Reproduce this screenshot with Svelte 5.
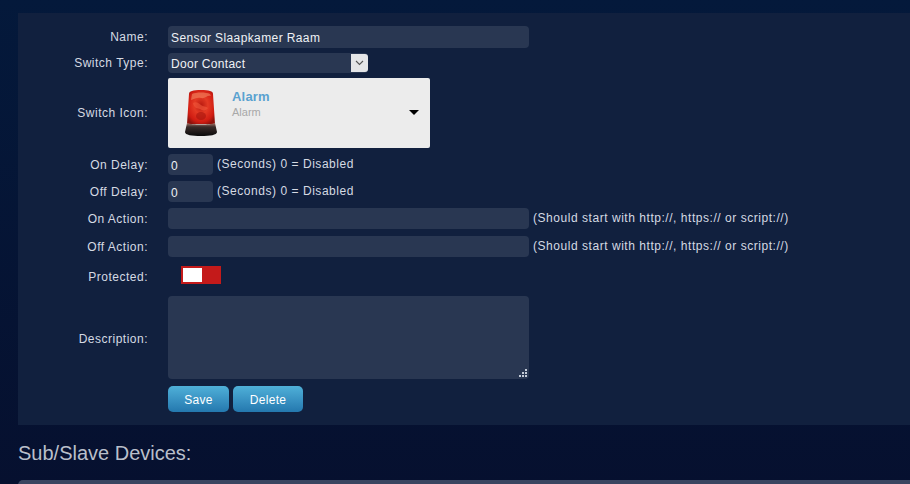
<script lang="ts">
  const delays = [
    { label: 'On Delay:', value: '0' },
    { label: 'Off Delay:', value: '0' },
  ];
  const actions = ['On Action:', 'Off Action:'];
</script>

<main class="page">
  <form class="panel">
    <div class="row row--name">
      <span class="label">Name:</span>
      <div class="input input--wide">Sensor Slaapkamer Raam</div>
    </div>
    <div class="row row--type">
      <span class="label">Switch Type:</span>
      <div class="select">
        <span class="select__value">Door Contact</span>
        <span class="select__btn">
          <svg width="9" height="6" viewBox="0 0 9 6"><path d="M1 1l3.5 3.5L8 1" fill="none" stroke="#555" stroke-width="1.1" /></svg>
        </span>
      </div>
    </div>
    <div class="row row--icon">
      <span class="label">Switch Icon:</span>
      <div class="iconbox">
        <svg class="siren" width="34" height="48" viewBox="0 0 34 48">
          <defs>
            <radialGradient id="dome" cx="0.5" cy="0.45" r="0.62">
              <stop offset="0" stop-color="#b81a10" />
              <stop offset="0.4" stop-color="#e43a24" />
              <stop offset="0.8" stop-color="#d01c12" />
              <stop offset="1" stop-color="#8f120c" />
            </radialGradient>
            <linearGradient id="base" x1="0" y1="0" x2="0" y2="1">
              <stop offset="0" stop-color="#a87468" />
              <stop offset="0.3" stop-color="#3a2c2a" />
              <stop offset="1" stop-color="#0a0a0a" />
            </linearGradient>
          </defs>
          <path d="M5 5C5 2 9 1 17 1s12 1 12 4l2 30H3z" fill="url(#dome)" />
          <path d="M8 5c4-2 14-2 18 0l1 2c-4-1-6 3-10 2s-6 1-10 2z" fill="#f07a58" opacity=".7" />
          <path d="M9 14c3-2 6 0 8 2s5 1 7 3c-3 4-6 2-8 1s-6 0-7-6z" fill="#f2583c" opacity=".6" />
          <ellipse cx="17" cy="27" rx="5" ry="4" fill="#a5140e" opacity=".6" />
          <path d="M3 34c5 2 23 2 28 0l2 9c0 3-7 4-16 4S1 46 1 43z" fill="url(#base)" />
        </svg>
        <div class="iconbox__copy">
          <strong>Alarm</strong>
          <small>Alarm</small>
        </div>
        <span class="iconbox__arrow"></span>
      </div>
    </div>
    {#each delays as delay}
      <div class="row row--delay">
        <span class="label">{delay.label}</span>
        <div class="input input--short">{delay.value}</div>
        <span class="hint">(Seconds) 0 = Disabled</span>
      </div>
    {/each}
    {#each actions as action}
      <div class="row row--action">
        <span class="label">{action}</span>
        <div class="input input--wide"></div>
        <span class="hint">(Should start with http://, https:// or script://)</span>
      </div>
    {/each}
    <div class="row row--protected">
      <span class="label">Protected:</span>
      <span class="toggle"><span class="toggle__knob"></span></span>
    </div>
    <div class="row row--desc">
      <span class="label">Description:</span>
      <div class="textarea">
        <svg class="grip" width="8" height="8" viewBox="0 0 8 8" fill="#c4ccd8">
          <rect x="6" y="0" width="2" height="2" /><rect x="3" y="3" width="2" height="2" /><rect x="6" y="3" width="2" height="2" />
          <rect x="0" y="6" width="2" height="2" /><rect x="3" y="6" width="2" height="2" /><rect x="6" y="6" width="2" height="2" />
        </svg>
      </div>
    </div>
    <div class="row row--buttons">
      <span class="label"></span>
      <button type="button" class="btn btn--save">Save</button>
      <button type="button" class="btn btn--delete">Delete</button>
    </div>
  </form>
  <h2>Sub/Slave Devices:</h2>
  <div class="table-top"></div>
</main>

<style>
  :global(body) {
    margin: 0;
    background: #051233;
  }

  .page {
    box-sizing: border-box;
    height: 484px;
    overflow: hidden;
    padding: 13px 0 0 18px;
    background: linear-gradient(180deg, #04193b 0, #06102f 100%);
    font-family: "Liberation Sans", Arial, sans-serif;
    font-size: 12px;
    color: #d8dde6;
  }

  .panel {
    box-sizing: border-box;
    height: 412px;
    padding-top: 13px;
    background: #11203e;
  }

  .row {
    display: flex;
    align-items: center;
  }

  .label {
    flex: none;
    width: 130px;
    margin-right: 20px;
    text-align: right;
    font-size: 12px;
    letter-spacing: 0.5px;
    color: #d5dae3;
  }

  .row--name { height: 22px; margin-bottom: 5px; }
  .row--type { height: 20px; margin-bottom: 5px; }
  .row--icon { height: 70px; margin-bottom: 6px; }
  .row--delay { height: 21px; margin-bottom: 6px; }
  .row--action { height: 21px; margin-bottom: 7px; }
  .row--protected { height: 18px; margin: 9px 0 12px; }
  .row--desc { height: 83px; margin-bottom: 7px; }
  .row--buttons { height: 26px; }

  .row--icon .label { margin-top: -1px; }
  .row--action .label { margin-top: 1px; }
  .row--protected .label { padding-top: 3px; }
  .row--desc .label { padding-top: 2px; }

  .input {
    box-sizing: border-box;
    height: 100%;
    padding: 2px 3px 0;
    display: flex;
    align-items: center;
    border-radius: 4px;
    background: #293752;
    color: #eef1f5;
    font-size: 12px;
    letter-spacing: 0.39px;
  }

  .input--wide { width: 361px; }
  .input--short { width: 45px; margin-right: 4px; }

  .hint {
    margin: -2px 0 0 4px;
    letter-spacing: 0.54px;
    color: #d5dae3;
  }

  .input--short + .hint {
    margin: -2px 0 0;
  }

  .select {
    box-sizing: border-box;
    width: 200px;
    height: 100%;
    padding-left: 3px;
    display: flex;
    align-items: center;
    justify-content: space-between;
    border-radius: 4px;
    background: #293752;
    color: #f0f2f6;
    letter-spacing: 0.3px;
  }

  .select__value { padding-top: 1px; }

  .select__btn {
    width: 17px;
    height: 18px;
    display: grid;
    place-items: center;
    border-radius: 0 3px 3px 0;
    background: #e4e5e7;
  }

  .iconbox {
    box-sizing: border-box;
    position: relative;
    width: 262px;
    height: 70px;
    display: flex;
    align-items: flex-start;
    border-radius: 2px;
    background: #ececec;
  }

  .siren {
    margin: 11px 0 0 16px;
    flex: none;
  }

  .iconbox__copy {
    margin: 11px 0 0 14px;
    display: flex;
    flex-direction: column;
    gap: 2px;
  }

  .iconbox__copy strong {
    font-size: 13px;
    letter-spacing: 0.2px;
    color: #5aa2d0;
  }

  .iconbox__copy small {
    font-size: 11px;
    color: #a8a8a8;
  }

  .iconbox__arrow {
    position: absolute;
    right: 11px;
    top: 32px;
    border-style: solid;
    border-width: 5px 5px 0;
    border-color: #000 transparent transparent;
  }

  .toggle {
    box-sizing: border-box;
    margin-left: 13px;
    width: 40px;
    height: 18px;
    padding: 2px;
    background: #c41a1a;
  }

  .toggle__knob {
    display: block;
    width: 19px;
    height: 14px;
    background: #fff;
  }

  .textarea {
    position: relative;
    width: 361px;
    height: 100%;
    border-radius: 4px;
    background: #293752;
  }

  .grip {
    position: absolute;
    right: 2px;
    bottom: 2px;
  }

  .btn {
    height: 26px;
    padding: 1px 0 0;
    border: 0;
    border-radius: 5px;
    background: linear-gradient(180deg, #4fb0d8 0, #3a94c4 50%, #2478ae 100%);
    color: #fff;
    font: 12px "Liberation Sans", Arial, sans-serif;
    letter-spacing: 0.3px;
  }

  .btn--save { width: 61px; margin-right: 4px; }
  .btn--delete { width: 70px; }

  h2 {
    margin: 16px 0 0;
    font-size: 20px;
    font-weight: 400;
    line-height: 24px;
    color: #b9bfca;
  }

  .table-top {
    margin-top: 15px;
    height: 10px;
    border-radius: 5px 0 0 0;
    background: #3a4560;
  }
</style>
